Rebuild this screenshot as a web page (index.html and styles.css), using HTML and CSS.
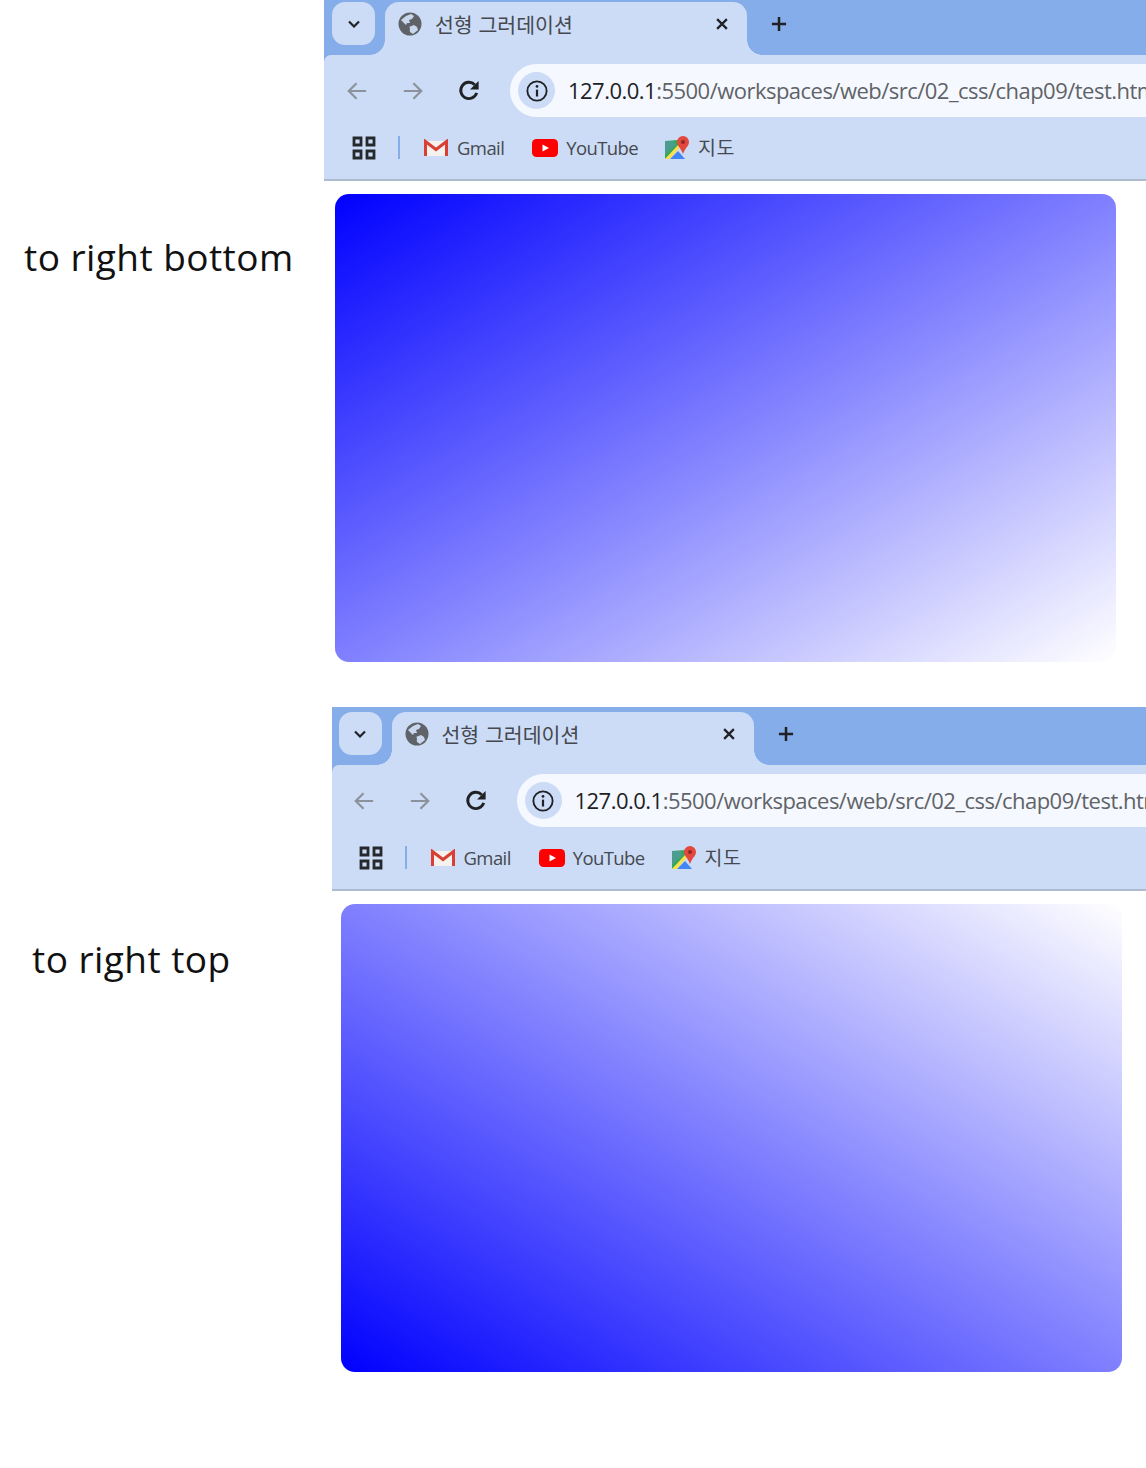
FILE: index.html
```html
<!DOCTYPE html>
<html lang="ko">
<head>
  <meta charset="UTF-8">
  <title>선형 그러데이션</title>
  <link rel="stylesheet" href="styles.css">
</head>
<body>

<svg class="icon-defs" xmlns="http://www.w3.org/2000/svg">
  <symbol id="i-chevron" viewBox="0 0 24 24"><path d="M6 9l6 6 6-6" fill="none" stroke="#202124" stroke-width="2.6"/></symbol>
  <symbol id="i-globe" viewBox="0 0 24 24"><circle cx="12" cy="12" r="11.5" fill="#5f6368"/><path d="M3 8l5-4 5-2 3 2-2 3-3 1 1 3h-3l-1 2zM11 15l5-2 3 2 1 3-5 4-3-2z" fill="#cdddf6" opacity=".95"/><path d="M9 13l3 3-1 5-3-3z" fill="#5f6368"/></symbol>
  <symbol id="i-close" viewBox="0 0 24 24"><path d="M5.5 5.5l13 13M18.5 5.5l-13 13" stroke="#202124" stroke-width="3"/></symbol>
  <symbol id="i-plus" viewBox="0 0 24 24"><path d="M12 3.5v17M3.5 12h17" stroke="#202124" stroke-width="3"/></symbol>
  <symbol id="i-back" viewBox="0 0 24 24"><path d="M22 12H3M11.5 3.5L3 12l8.5 8.5" fill="none" stroke="#8b929c" stroke-width="2.4"/></symbol>
  <symbol id="i-forward" viewBox="0 0 24 24"><path d="M2 12h19M12.500 3.500L21 12l-8.500 8.500" fill="none" stroke="#8b929c" stroke-width="2.400"/></symbol>
  <symbol id="i-reload" viewBox="0 0 24 24"><path d="M19.500 14.500A8.500 8.500 0 1 1 17.500 6" fill="none" stroke="#202124" stroke-width="3"/><path d="M21.500 2v9h-9z" fill="#202124"/></symbol>
  <symbol id="i-info" viewBox="0 0 24 24"><circle cx="12" cy="12" r="10.500" fill="none" stroke="#202124" stroke-width="2"/><path d="M12 10.500V18" stroke="#202124" stroke-width="2.400"/><circle cx="12" cy="7" r="1.500" fill="#202124"/></symbol>
  <symbol id="i-apps" viewBox="0 0 24 24"><path d="M2 2h7v7H2zM15 2h7v7h-7zM2 15h7v7H2zM15 15h7v7h-7z" fill="none" stroke="#25282c" stroke-width="2.800"/></symbol>
  <symbol id="i-gmail" viewBox="0 0 24 18"><path d="M2 2h20v15H2z" fill="#f4f1ee"/><path d="M1.500 17V2.500L12 10.500l10.500-8V17" fill="none" stroke="#d93f33" stroke-width="3"/></symbol>
  <symbol id="i-youtube" viewBox="0 0 26 18"><rect width="26" height="18" rx="4.500" fill="#f00"/><path d="M10.500 5.500l6.500 3.500-6.500 3.500z" fill="#fff"/></symbol>
  <symbol id="i-maps" viewBox="0 0 24 24"><path d="M0 5l13-1v7L0 23z" fill="#34a853"/><path d="M0 5h8l3 4-11 10z" fill="#4a9d8f"/><path d="M0 23L13 9l2 2-10 12z" fill="#fbe04d"/><path d="M5 23l8-8 7 8z" fill="#4285f4"/><path d="M18 0a6 6 0 0 1 6 6c0 4-4 6-6 12-2-6-6-8-6-12a6 6 0 0 1 6-6z" fill="#e2483d"/><circle cx="18" cy="6" r="2" fill="#8f2a22"/></symbol>
</svg>

<section class="demo demo-first">
  <h2 class="demo-label">to right bottom</h2>
  <div class="browser">
    <div class="tab-strip">
      <span class="tab-search"><svg class="icon-s"><use href="#i-chevron"/></svg></span>
      <div class="tab">
        <svg class="icon-globe"><use href="#i-globe"/></svg>
        <span class="tab-title">선형 그러데이션</span>
        <svg class="icon-close"><use href="#i-close"/></svg>
      </div>
      <svg class="icon-plus"><use href="#i-plus"/></svg>
    </div>
    <div class="toolbar">
      <svg class="icon-nav"><use href="#i-back"/></svg>
      <svg class="icon-nav"><use href="#i-forward"/></svg>
      <svg class="icon-nav"><use href="#i-reload"/></svg>
      <div class="omnibox">
        <span class="site-info"><svg class="icon-info"><use href="#i-info"/></svg></span>
        <span class="url"><b>127.0.0.1</b>:5500/workspaces/web/src/02_css/chap09/test.html</span>
      </div>
    </div>
    <div class="bookmarks">
      <svg class="icon-apps"><use href="#i-apps"/></svg>
      <span class="bm-sep"></span>
      <span class="bm bm-gmail"><svg class="icon-gmail"><use href="#i-gmail"/></svg>Gmail</span>
      <span class="bm bm-youtube"><svg class="icon-youtube"><use href="#i-youtube"/></svg>YouTube</span>
      <span class="bm bm-maps"><svg class="icon-maps"><use href="#i-maps"/></svg>지도</span>
    </div>
    <div class="viewport">
      <div class="box to-right-bottom"></div>
    </div>
  </div>
</section>

<section class="demo demo-second">
  <h2 class="demo-label">to right top</h2>
  <div class="browser">
    <div class="tab-strip">
      <span class="tab-search"><svg class="icon-s"><use href="#i-chevron"/></svg></span>
      <div class="tab">
        <svg class="icon-globe"><use href="#i-globe"/></svg>
        <span class="tab-title">선형 그러데이션</span>
        <svg class="icon-close"><use href="#i-close"/></svg>
      </div>
      <svg class="icon-plus"><use href="#i-plus"/></svg>
    </div>
    <div class="toolbar">
      <svg class="icon-nav"><use href="#i-back"/></svg>
      <svg class="icon-nav"><use href="#i-forward"/></svg>
      <svg class="icon-nav"><use href="#i-reload"/></svg>
      <div class="omnibox">
        <span class="site-info"><svg class="icon-info"><use href="#i-info"/></svg></span>
        <span class="url"><b>127.0.0.1</b>:5500/workspaces/web/src/02_css/chap09/test.html</span>
      </div>
    </div>
    <div class="bookmarks">
      <svg class="icon-apps"><use href="#i-apps"/></svg>
      <span class="bm-sep"></span>
      <span class="bm bm-gmail"><svg class="icon-gmail"><use href="#i-gmail"/></svg>Gmail</span>
      <span class="bm bm-youtube"><svg class="icon-youtube"><use href="#i-youtube"/></svg>YouTube</span>
      <span class="bm bm-maps"><svg class="icon-maps"><use href="#i-maps"/></svg>지도</span>
    </div>
    <div class="viewport">
      <div class="box to-right-top"></div>
    </div>
  </div>
</section>

</body>
</html>
```

FILE: styles.css
```css
* {
  box-sizing: border-box;
  margin: 0;
  padding: 0;
}

body {
  background: #fff;
  font-family: "Open Sans", "Noto Sans CJK KR", sans-serif;
  overflow-x: hidden;
}

.icon-defs {
  display: none;
}

.demo {
  display: flex;
  --chrome: #85adea;
  --toolbar: #ccdcf6;
}

.demo-first {
  height: 707px;
  --strip-top: 2px;
  --inset: 8px;
  --box-inset: 11px;
}

.demo-second {
  height: 761px;
  --strip-top: 5px;
  --inset: 6.5px;
  --box-inset: 9px;
}

.demo-first .demo-label {
  width: 324px;
  padding: 232px 0 0 24px;
}

.demo-second .demo-label {
  width: 332px;
  padding: 227px 0 0 32px;
}

.demo-label {
  flex: none;
  font-size: 37px;
  line-height: 50px;
  font-weight: 400;
  letter-spacing: 0.45px;
  color: #111;
  white-space: nowrap;
}

.browser {
  flex: 1;
  min-width: 0;
  overflow: hidden;
  background: linear-gradient(var(--chrome) 70px, transparent 70px);
}

/* tab strip */
.tab-strip {
  display: flex;
  height: calc(53px + var(--strip-top));
  padding: var(--strip-top) 0 0 var(--inset);
  background: var(--chrome);
}

.tab-search {
  flex: none;
  width: 43px;
  height: 43px;
  margin-right: 10px;
  display: flex;
  align-items: center;
  justify-content: center;
  background: var(--toolbar);
  border-radius: 13px;
}

.icon-s {
  width: 20px;
  height: 20px;
}

.tab {
  position: relative;
  flex: none;
  width: 362px;
  display: flex;
  align-items: center;
  height: 53px;
  padding: 0 16px 9px 13px;
  background: var(--toolbar);
  border-radius: 14px 14px 0 0;
}

.tab::before,
.tab::after {
  content: "";
  position: absolute;
  bottom: 0;
  width: 15px;
  height: 15px;
}

.tab::before {
  left: -15px;
  background: radial-gradient(circle at 0 0, transparent 14.5px, var(--toolbar) 15px);
}

.tab::after {
  right: -15px;
  background: radial-gradient(circle at 100% 0, transparent 14.5px, var(--toolbar) 15px);
}

.icon-globe {
  flex: none;
  width: 24px;
  height: 24px;
  margin-right: 13px;
}

.tab-title {
  flex: 1;
  font-family: "Noto Sans CJK KR", sans-serif;
  font-size: 20.5px;
  line-height: 26px;
  color: #45494f;
  white-space: nowrap;
}

.icon-close {
  flex: none;
  width: 18px;
  height: 18px;
}

.icon-plus {
  flex: none;
  width: 20px;
  height: 20px;
  margin: 12px 0 0 22px;
}

/* address row */
.toolbar {
  display: flex;
  align-items: center;
  height: 71px;
  padding: 0 0 0 calc(var(--inset) + 14px);
  background: var(--toolbar);
  border-radius: 7px 0 0 0;
}

.icon-nav {
  flex: none;
  width: 22px;
  height: 22px;
  margin-right: 34px;
}

.icon-nav:nth-child(3) {
  width: 23px;
  height: 23px;
  margin-right: 32px;
}

.omnibox {
  flex: none;
  width: 900px;
  height: 53px;
  margin-left: -3px;
  padding-left: 8px;
  display: flex;
  align-items: center;
  background: #f5f8fe;
  border-radius: 27px 0 0 27px;
}

.site-info {
  flex: none;
  width: 37px;
  height: 37px;
  margin-right: 13px;
  display: flex;
  align-items: center;
  justify-content: center;
  background: var(--toolbar);
  border-radius: 50%;
}

.icon-info {
  width: 22px;
  height: 22px;
}

.url {
  padding-bottom: 2px;
  font-size: 22px;
  letter-spacing: -0.52px;
  color: #5f6368;
  white-space: nowrap;
}

.url b {
  font-weight: 400;
  color: #202124;
}

/* bookmarks */
.bookmarks {
  display: flex;
  align-items: center;
  height: 55px;
  padding: 0 0 10px calc(var(--inset) + 20px);
  background: var(--toolbar);
  border-bottom: 2px solid #aebbce;
}

.icon-apps {
  flex: none;
  width: 24px;
  height: 24px;
}

.bm-sep {
  flex: none;
  width: 2px;
  height: 23px;
  margin: 0 24px 0 22px;
  background: #85adea;
}

.bm {
  display: flex;
  align-items: center;
  font-size: 18.5px;
  letter-spacing: -0.6px;
  color: #45494f;
  white-space: nowrap;
}

.bm-gmail {
  margin-right: 28px;
}

.bm-youtube {
  margin-right: 27px;
}

.bm-maps {
  font-size: 19.5px;
  letter-spacing: 0.5px;
  line-height: 24px;
}

.icon-gmail {
  width: 24px;
  height: 18px;
  margin-right: 9px;
}

.icon-youtube {
  width: 26px;
  height: 18px;
  margin-right: 8px;
}

.icon-maps {
  width: 24px;
  height: 24px;
  margin-right: 9px;
}

/* page content */
.viewport {
  padding: 13px 0 0 var(--box-inset);
  background: #fff;
}

.box {
  width: 781px;
  height: 468px;
  border-radius: 14px;
}

.to-right-bottom {
  background: linear-gradient(to right bottom, #00f, #fff);
}

.to-right-top {
  background: linear-gradient(to right top, #00f, #fff);
}
```
